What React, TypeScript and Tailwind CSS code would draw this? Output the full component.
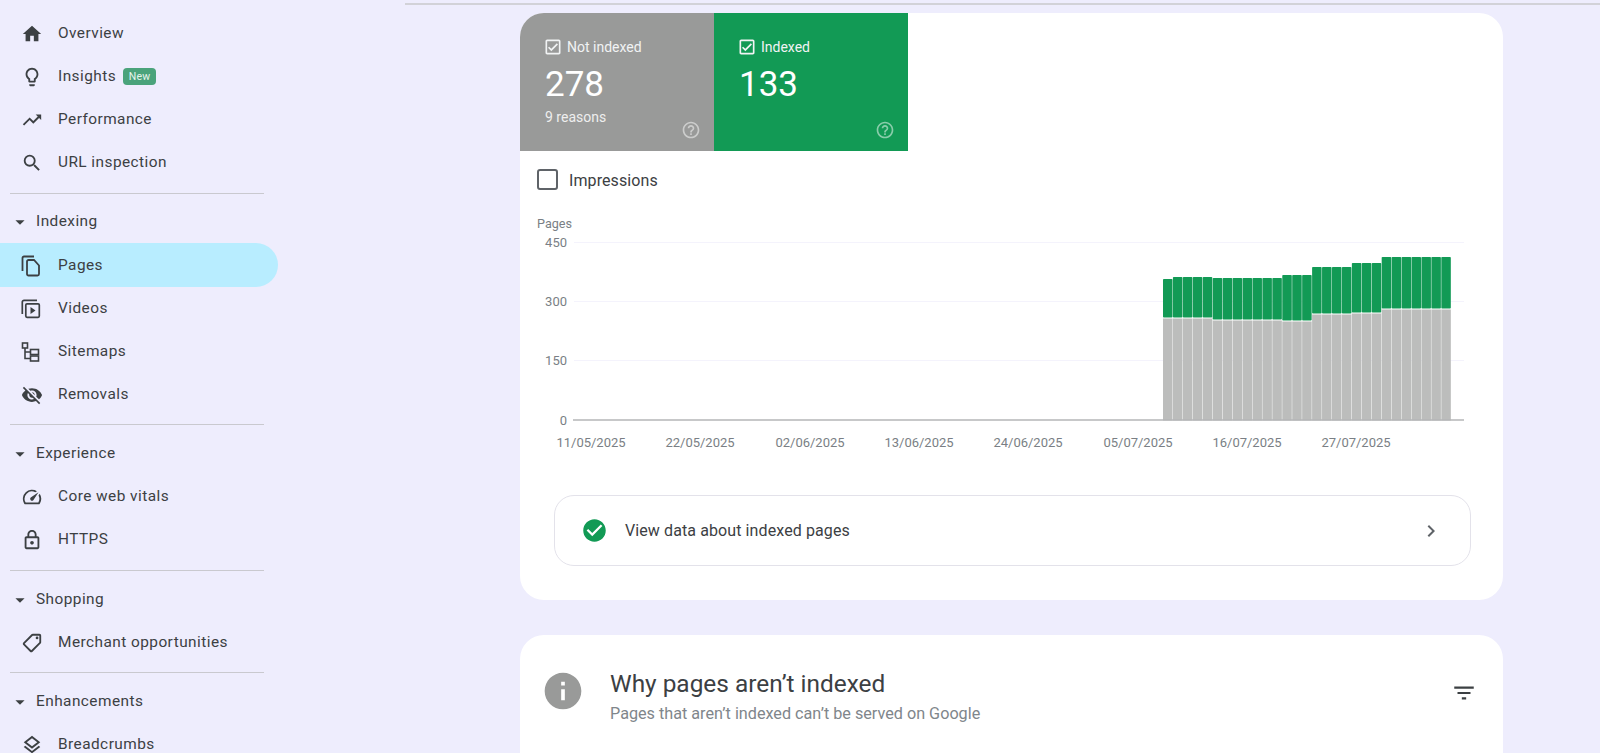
import React from 'react';
import {
  MdArrowDropDown,
  MdCheckCircle,
  MdChevronRight,
  MdFilterList,
  MdHome,
  MdInfo,
  MdOutlineCheckBox,
  MdOutlineHelpOutline,
  MdOutlineLayers,
  MdOutlineLightbulb,
  MdOutlineLock,
  MdOutlineSell,
  MdOutlineSpeed,
  MdSearch,
  MdTrendingUp,
  MdVisibilityOff,
} from 'react-icons/md';

function PagesIcon() {
  return (
    <svg width="20" height="22" viewBox="0 0 20 22" fill="none" stroke="currentColor" strokeWidth="1.8">
      <path d="M13 1.5H3a1.5 1.5 0 0 0-1.5 1.5v13" />
      <path d="M6 6.5a1.5 1.5 0 0 1 1.5-1.5h5.5l5 5.5v8.5a1.5 1.5 0 0 1-1.5 1.5h-9a1.5 1.5 0 0 1-1.5-1.5z" />
    </svg>
  );
}

function VideosIcon() {
  return (
    <svg width="20" height="20" viewBox="0 0 20 20" fill="none" stroke="currentColor" strokeWidth="1.7">
      <path d="M16 1.3H3a1.7 1.7 0 0 0-1.7 1.7v12" />
      <rect x="4.8" y="4.8" width="13.5" height="13.5" rx="1.2" />
      <path d="M9.5 8v7l5-3.5z" fill="currentColor" stroke="none" />
    </svg>
  );
}

function SitemapIcon() {
  return (
    <svg width="20" height="20" viewBox="0 0 20 20" fill="none" stroke="currentColor" strokeWidth="1.6">
      <rect x="1.5" y="1" width="5" height="5" />
      <rect x="9.5" y="7.5" width="8" height="5" />
      <rect x="9.5" y="14" width="8" height="5" />
      <path d="M4 6v10.5h5.5M4 10h5.5" />
    </svg>
  );
}

function NavItem({ icon, label, active, badge }: { icon: React.ReactNode; label: string; active?: boolean; badge?: boolean }) {
  return (
    <div
      className={
        active
          ? 'flex h-[44px] w-[278px] items-center rounded-r-full bg-[#b8edff] pl-[21px] pt-[1px] text-[#3c4043]'
          : 'flex h-[43px] w-[278px] items-center pl-[21px] text-[#3c4043]'
      }
    >
      <span className="flex w-[37px] shrink-0 items-center text-[#3c4043]">{icon}</span>
      <span className="text-[15.4px] leading-none tracking-[0.45px]">{label}</span>
      {badge && (
        <span className="ml-[7px] flex h-[17px] w-[33px] items-center justify-center rounded-[4px] bg-[#4aa37b] text-[10.5px] tracking-[0.3px] text-[#e6f4ec]">
          New
        </span>
      )}
    </div>
  );
}

function NavHeader({ label, className }: { label: string; className: string }) {
  return (
    <div className={`flex items-center pl-[10px] text-[#3c4043] ${className}`}>
      <span className="flex w-[26px] shrink-0 items-center">
        <MdArrowDropDown size={22} className="-ml-[1px]" />
      </span>
      <span className="text-[15.4px] leading-none tracking-[0.45px]">{label}</span>
    </div>
  );
}

function Divider({ className }: { className: string }) {
  return <div className={`ml-[10px] h-px w-[254px] bg-[#c9c9cf] ${className}`} />;
}

function Tile({ label, value, sub, color }: { label: string; value: string; sub?: string; color: string }) {
  return (
    <div className={`relative h-[138px] w-[194px] pl-[25px] pt-[24px] text-white ${color}`}>
      <div className="flex h-[20px] items-center gap-[4px] text-[14px] text-[#f1f3f4]">
        <MdOutlineCheckBox size={20} className="-ml-[2px]" />
        <span>{label}</span>
      </div>
      <div className="mt-[6px] text-[35px] leading-[44px]">{value}</div>
      {sub && <div className="mt-[1px] text-[14px] leading-[18px] text-[#eeeeee]">{sub}</div>}
      <MdOutlineHelpOutline size={20} className="absolute bottom-[11px] right-[13px] text-white/50" />
    </div>
  );
}

// [top of the green segment, top of the grey segment]
const bars = [
  [279, 318], [277, 318], [277, 318], [277, 318], [277, 318],
  [278, 320], [278, 320], [278, 320], [278, 320], [278, 320], [278, 320], [278, 320],
  [275, 321], [275, 321], [275, 321],
  [267, 314], [267, 314], [267, 314], [267, 314],
  [263, 313], [263, 313], [263, 313],
  [257, 309], [257, 309], [257, 309], [257, 309], [257, 309], [257, 309], [257, 309],
];

const xLabels = [
  { x: 591, t: '11/05/2025' },
  { x: 700, t: '22/05/2025' },
  { x: 810, t: '02/06/2025' },
  { x: 919, t: '13/06/2025' },
  { x: 1028, t: '24/06/2025' },
  { x: 1138, t: '05/07/2025' },
  { x: 1247, t: '16/07/2025' },
  { x: 1356, t: '27/07/2025' },
];

const yLabels: [number, string][] = [[242, '450'], [301, '300'], [360, '150'], [420, '0']];

// viewBox uses page pixels so the numbers can be read straight off the screenshot
function Chart() {
  return (
    <svg width="983" height="260" viewBox="520 200 983 260" className="block" fontFamily="Roboto, sans-serif">
      <text x="537" y="228" fontSize="12.6" fill="#7a7f85">Pages</text>
      {[242, 301, 360].map((y) => (
        <line key={y} x1="574" x2="1464" y1={y + 0.5} y2={y + 0.5} stroke="#f4f3fc" />
      ))}
      {yLabels.map(([y, t]) => (
        <text key={t} x="567" y={y + 4.5} textAnchor="end" fontSize="13" fill="#7a7f85">{t}</text>
      ))}
      {bars.map(([green, grey], i) => {
        const x = 1163 + i * 9.94;
        return (
          <g key={i}>
            <rect x={x} y={green} width={9.5} height={grey - green - 0.5} rx={0.8} fill="#129a55" />
            <rect x={x} y={grey + 0.5} width={9.5} height={420 - grey} fill="#bcbdbc" />
          </g>
        );
      })}
      <line x1="573" x2="1464" y1="420" y2="420" stroke="#b5b6b7" strokeWidth="1.5" />
      {xLabels.map((l) => (
        <text key={l.t} x={l.x} y="446.5" textAnchor="middle" fontSize="13" fill="#7a7f85">{l.t}</text>
      ))}
    </svg>
  );
}

export default function App() {
  return (
    <div className='flex h-[753px] w-[1600px] overflow-hidden bg-[#eeedfd] font-["Roboto",sans-serif]'>
      <nav className="w-[405px] shrink-0 pt-[12px]">
        <NavItem icon={<MdHome size={22} />} label="Overview" />
        <NavItem icon={<MdOutlineLightbulb size={22} />} label="Insights" badge />
        <NavItem icon={<MdTrendingUp size={22} />} label="Performance" />
        <NavItem icon={<MdSearch size={22} />} label="URL inspection" />
        <Divider className="mt-[9px]" />
        <NavHeader label="Indexing" className="mt-[7px] h-[42px]" />
        <NavItem icon={<PagesIcon />} label="Pages" active />
        <NavItem icon={<VideosIcon />} label="Videos" />
        <NavItem icon={<SitemapIcon />} label="Sitemaps" />
        <NavItem icon={<MdVisibilityOff size={22} />} label="Removals" />
        <Divider className="mt-[8px]" />
        <NavHeader label="Experience" className="mt-[7px] h-[43px]" />
        <NavItem icon={<MdOutlineSpeed size={22} />} label="Core web vitals" />
        <NavItem icon={<MdOutlineLock size={22} />} label="HTTPS" />
        <Divider className="mt-[9px]" />
        <NavHeader label="Shopping" className="mt-[7px] h-[43px]" />
        <NavItem icon={<MdOutlineSell size={22} className="-scale-x-100" />} label="Merchant opportunities" />
        <Divider className="mt-[8px]" />
        <NavHeader label="Enhancements" className="mt-[7px] h-[43px]" />
        <NavItem icon={<MdOutlineLayers size={22} />} label="Breadcrumbs" />
      </nav>

      <main className="flex-1 pl-[115px]">
        <div className="-ml-[115px] mt-[3px] h-[2px] bg-[#d2d2d8]" />
        <div className="mt-[8px] h-[587px] w-[983px] overflow-hidden rounded-[24px] bg-white">
          <div className="flex">
            <Tile label="Not indexed" value="278" sub="9 reasons" color="bg-[#999a99]" />
            <Tile label="Indexed" value="133" color="bg-[#129a55]" />
          </div>
          <div className="flex h-[57px] items-center pl-[17px]">
            <span className="h-[21px] w-[21px] rounded-[3px] border-2 border-[#5f6368]" />
            <span className="ml-[11px] pt-[2px] text-[16px] tracking-[0.1px] text-[#3c4043]">Impressions</span>
          </div>
          <div className="-mt-[8px] h-[260px] overflow-hidden">
            <Chart />
          </div>
          <div className="ml-[34px] mt-[35px] flex h-[71px] w-[917px] items-center rounded-[20px] border border-[#e3e2ea] pl-[26px] pr-[27px]">
            <MdCheckCircle size={27} className="text-[#129a55]" />
            <span className="ml-[17px] flex-1 text-[16px] tracking-[0.1px] text-[#3c4043]">View data about indexed pages</span>
            <MdChevronRight size={24} className="text-[#5f6368]" />
          </div>
        </div>
        <div className="mt-[35px] h-[200px] w-[983px] rounded-t-[24px] bg-white">
          <div className="flex items-start pl-[21px] pr-[26px] pt-[35px]">
            <MdInfo size={44} className="-mt-[1px] text-[#999a99]" />
            <div className="ml-[25px] flex-1">
              <h2 className="text-[24.4px] leading-[28px] text-[#3c4043]">Why pages aren’t indexed</h2>
              <p className="mt-[6px] text-[16.2px] leading-[20px] text-[#80868b]">Pages that aren’t indexed can’t be served on Google</p>
            </div>
            <MdFilterList size={26} className="mt-[10px] text-[#3c4043]" />
          </div>
        </div>
      </main>
    </div>
  );
}
